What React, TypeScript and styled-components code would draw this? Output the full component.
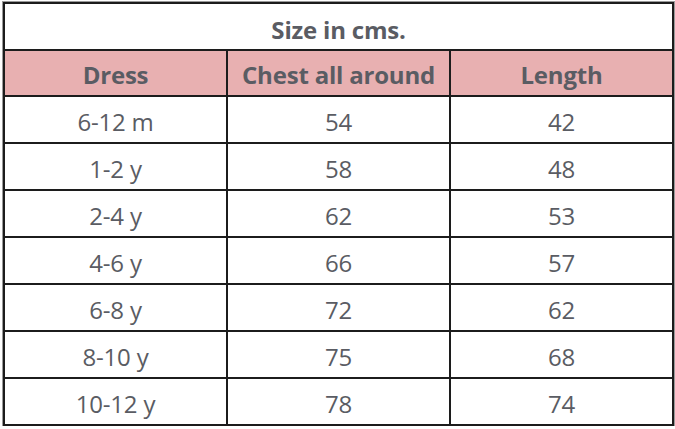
import React from "react";
import styled, { createGlobalStyle } from "styled-components";

const Global = createGlobalStyle`
  html, body { margin: 0; padding: 0; background: #ffffff; }
  body { font-family: "Open Sans", Lato, "Liberation Sans", sans-serif; }
`;

const Page = styled.div`
  padding: 2px 0 0 3px;
`;

const Grid = styled.div`
  display: grid;
  grid-template-columns: repeat(3, 221px);
  grid-template-rows: 45px 44px repeat(7, 45px);
  gap: 2px;
  border: 2px solid #1c1c1c;
  background: #1c1c1c;
  width: max-content;
  box-shadow: 0 0 0 1px #9a9a9a;
`;

const Cell = styled.div<{ $head?: boolean; $span?: number }>`
  grid-column: span ${(p) => p.$span ?? 1};
  display: flex;
  align-items: center;
  justify-content: center;
  padding-top: 4px;
  box-sizing: border-box;
  background: ${(p) => (p.$head ? "#e8b0b1" : "#ffffff")};
  color: #5a5c63;
  font-size: 24px;
  font-weight: ${(p) => (p.$head ? 700 : 400)};
  letter-spacing: -0.2px;
  line-height: 1;
`;

const Title = styled(Cell)`
  font-weight: 700;
  padding-top: 6px;
`;

const rows: [string, string, string][] = [
  ["6-12 m", "54", "42"],
  ["1-2 y", "58", "48"],
  ["2-4 y", "62", "53"],
  ["4-6 y", "66", "57"],
  ["6-8 y", "72", "62"],
  ["8-10 y", "75", "68"],
  ["10-12 y", "78", "74"],
];

export default function App() {
  return (
    <>
      <Global />
      <Page>
        <Grid>
          <Title $span={3}>Size in cms.</Title>
          <Cell $head>Dress</Cell>
          <Cell $head>Chest all around</Cell>
          <Cell $head>Length</Cell>
          {rows.map((r) => (
            <React.Fragment key={r[0]}>
              <Cell>{r[0]}</Cell>
              <Cell>{r[1]}</Cell>
              <Cell>{r[2]}</Cell>
            </React.Fragment>
          ))}
        </Grid>
      </Page>
    </>
  );
}
